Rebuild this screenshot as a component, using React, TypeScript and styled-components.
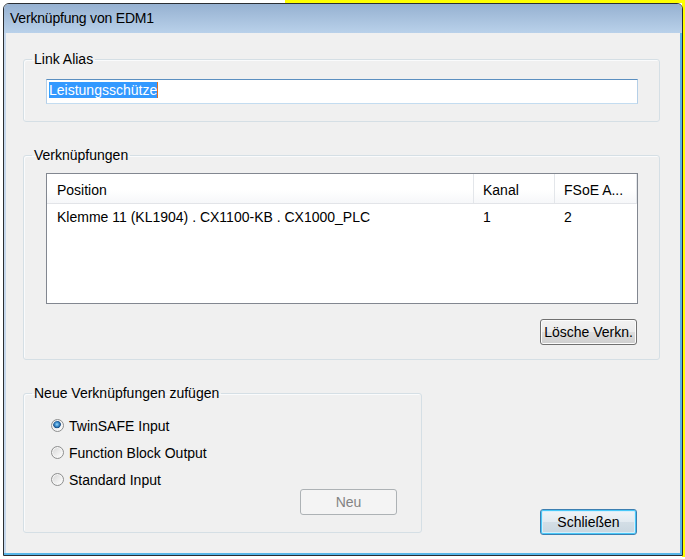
import styled, { createGlobalStyle, css } from "styled-components";

const GlobalStyle = createGlobalStyle`
  html, body {
    margin: 0;
    padding: 0;
  }
  body {
    width: 685px;
    height: 559px;
    overflow: hidden;
    font-family: "Liberation Sans", Arial, sans-serif;
    background:
      linear-gradient(#ffff00, #ffff00) no-repeat right top / 3px 557px,
      linear-gradient(#ffff00, #ffff00) no-repeat right top / 400px 3px,
      #ffffff;
  }
`;

const Dialog = styled.div`
  box-sizing: border-box;
  margin: 3px 0 0 3px;
  width: 680px;
  height: 553px;
  border: 1px solid #2a2e33;
  border-radius: 6px 6px 0 0;
  overflow: hidden;
  display: flex;
  flex-direction: column;
`;

const TitleBar = styled.div`
  height: 29px;
  flex: none;
  display: flex;
  align-items: center;
  padding: 0 0 1px 6px;
  box-sizing: border-box;
  background: linear-gradient(#96b1d1, #b9d1ea);
  font-size: 14px;
  letter-spacing: -0.2px;
  color: #000;
`;

const Frame = styled.div`
  flex: 1;
  display: flex;
  padding: 0 2px 2px;
  background: #c6d8ed;
  box-shadow: inset -2px -2px 0 #58b6e8;
`;

const Client = styled.div`
  flex: 1;
  display: flex;
  flex-direction: column;
  padding: 18px 20px 18px 17px;
  background: #f0f0f0;
  font-size: 14px;
  color: #000;
`;

const GroupBox = styled.fieldset<{ $width?: number; $top?: number; $bottom?: number }>`
  margin: ${(p) => p.$top ?? 0}px 0 ${(p) => p.$bottom ?? 0}px 0;
  padding: 0;
  min-width: 0;
  ${(p) =>
    p.$width &&
    css`
      width: ${p.$width}px;
      box-sizing: border-box;
    `}
  border: 1px solid #d5dfe5;
  border-radius: 3px;
  box-shadow: inset 1px 1px 0 #fafbfc;
`;

const Legend = styled.legend`
  margin-left: 8px;
  padding: 0 2px;
  line-height: 16px;
  font-size: 14px;
`;

const GroupBody = styled.div<{ $pad: string }>`
  padding: ${(p) => p.$pad};
  display: flex;
`;

const TextBox = styled.div`
  flex: 1;
  box-sizing: border-box;
  height: 25px;
  padding: 2px 2px;
  border: 1px solid;
  border-color: #5b8fc0 #b5cfe7 #c3dcf0 #b5cfe7;
  background: #fff;
  line-height: 16px;
`;

const Selected = styled.span`
  display: inline-block;
  background: #3399ff;
  color: #fff;
  border-right: 1px solid #e07020;
`;

const Column = styled.div`
  flex: 1;
  display: flex;
  flex-direction: column;
`;

const ListView = styled.div`
  height: 131px;
  box-sizing: border-box;
  border: 1px solid #828790;
  background: #fff;
`;

const Row = styled.div<{ $header?: boolean }>`
  display: grid;
  grid-template-columns: 427px 81px 1fr;
  height: ${(p) => (p.$header ? 30 : 25)}px;
  ${(p) =>
    p.$header &&
    css`
      background: linear-gradient(#ffffff 0%, #ffffff 55%, #f6f7f9 100%);
      border-bottom: 1px solid #e2e4e8;
      box-sizing: border-box;
    `}
`;

const Cell = styled.div<{ $header?: boolean }>`
  display: flex;
  align-items: center;
  padding: ${(p) => (p.$header ? "3px 0 0 9px" : "0 0 0 9px")};
  white-space: nowrap;
  overflow: hidden;
  ${(p) =>
    p.$header &&
    css`
      border-right: 1px solid #e3e6ea;
    `}
  &:first-child {
    padding-left: 10px;
  }
`;

const ButtonRow = styled.div`
  display: flex;
  justify-content: flex-end;
  margin-top: 15px;
  padding-right: 1px;
`;

const Button = styled.button<{ $variant?: "normal" | "default" | "disabled" }>`
  width: 97px;
  height: 26px;
  padding: 0;
  border-radius: 3px;
  font-family: "Liberation Sans", Arial, sans-serif;
  font-size: 14px;
  color: #000;
  border: 1px solid #707070;
  background: linear-gradient(#f2f2f2 0%, #ebebeb 50%, #dddddd 51%, #cfcfcf 100%);
  box-shadow: inset 0 0 0 1px #fcfcfc;
  ${(p) =>
    p.$variant === "default" &&
    css`
      border-color: #3c7fb1;
      box-shadow: inset 0 0 0 1px #48c8f8, inset 0 0 0 2px #d5eefb;
      background: linear-gradient(#f0f4f8 0%, #e2eaf0 50%, #d3dee6 51%, #c9d6df 100%);
    `}
  ${(p) =>
    p.$variant === "disabled" &&
    css`
      border-color: #adb2b5;
      background: #f4f4f4;
      color: #838383;
      box-shadow: none;
    `}
`;

const NewButton = styled(Button)`
  align-self: flex-end;
`;

const BottomRow = styled.div`
  margin-top: auto;
  display: flex;
  align-items: flex-end;
  justify-content: space-between;
  padding-right: 23px;
`;

const RadioList = styled.div`
  flex: 1;
  display: flex;
  flex-direction: column;
  padding-bottom: 22px;
`;

const RadioRow = styled.label`
  height: 27px;
  display: flex;
  align-items: center;
  gap: 5px;
`;

const Radio = styled.span<{ $checked?: boolean }>`
  width: 13px;
  height: 13px;
  box-sizing: border-box;
  border-radius: 50%;
  border: 1px solid #8e8f8f;
  background: linear-gradient(135deg, #d4d4d4 0%, #f4f4f4 70%, #ffffff 100%);
  box-shadow: inset 0 0 0 1px #f6f6f6;
  ${(p) =>
    p.$checked &&
    css`
      background:
        radial-gradient(circle at 45% 40%, #9fd8f7 0px, #3d8fcf 2px, #1b4f86 3.5px, transparent 4.2px),
        linear-gradient(135deg, #d4d4d4 0%, #f4f4f4 70%, #ffffff 100%);
    `}
`;

const RadioText = styled.span`
  line-height: 16px;
`;

const radios = [
  { label: "TwinSAFE Input", checked: true },
  { label: "Function Block Output", checked: false },
  { label: "Standard Input", checked: false },
];

const links = [
  { position: "Klemme 11 (KL1904) . CX1100-KB . CX1000_PLC", kanal: "1", fsoe: "2" },
];

export default function App() {
  return (
    <>
      <GlobalStyle />
      <Dialog>
        <TitleBar>Verknüpfung von EDM1</TitleBar>
        <Frame>
          <Client>
            <GroupBox>
              <Legend>Link Alias</Legend>
              <GroupBody $pad="12px 21px 17px 22px">
                <TextBox>
                  <Selected>Leistungsschütze</Selected>
                </TextBox>
              </GroupBody>
            </GroupBox>

            <GroupBox $top={25}>
              <Legend>Verknüpfungen</Legend>
              <GroupBody $pad="10px 21px 14px 22px">
                <Column>
                  <ListView>
                    <Row $header>
                      <Cell $header>Position</Cell>
                      <Cell $header>Kanal</Cell>
                      <Cell $header>FSoE A...</Cell>
                    </Row>
                    {links.map((l) => (
                      <Row key={l.position}>
                        <Cell>{l.position}</Cell>
                        <Cell>{l.kanal}</Cell>
                        <Cell>{l.fsoe}</Cell>
                      </Row>
                    ))}
                  </ListView>
                  <ButtonRow>
                    <Button>Lösche Verkn.</Button>
                  </ButtonRow>
                </Column>
              </GroupBody>
            </GroupBox>

            <BottomRow>
              <GroupBox $width={399} $bottom={2}>
                <Legend>Neue Verknüpfungen zufügen</Legend>
                <GroupBody $pad="11px 24px 17px 27px">
                  <RadioList>
                    {radios.map((r) => (
                      <RadioRow key={r.label}>
                        <Radio $checked={r.checked} />
                        <RadioText>{r.label}</RadioText>
                      </RadioRow>
                    ))}
                  </RadioList>
                  <NewButton $variant="disabled" disabled>
                    Neu
                  </NewButton>
                </GroupBody>
              </GroupBox>
              <Button $variant="default">Schließen</Button>
            </BottomRow>
          </Client>
        </Frame>
      </Dialog>
    </>
  );
}
